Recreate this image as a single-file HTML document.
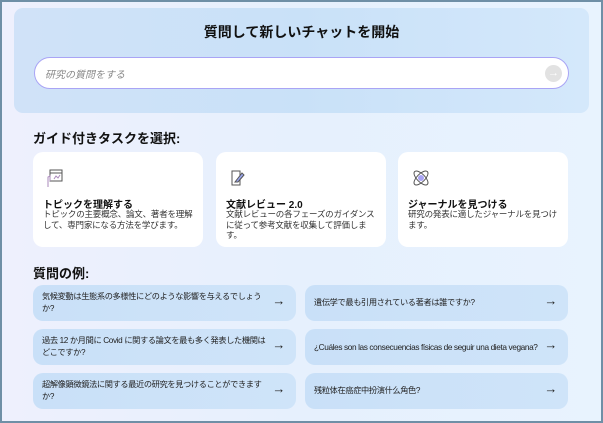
<!DOCTYPE html>
<html><head><meta charset="utf-8"><style>
*{margin:0;padding:0;box-sizing:border-box}
html,body{width:603px;height:423px;overflow:hidden}
body{font-family:"Liberation Sans","Noto Sans CJK JP",sans-serif;color:#111;background:linear-gradient(90deg,#eef0fd,#e6f0fd 50%,#e8f3fe);border:2px solid #6f8fa6;position:relative}
.top{position:absolute;left:12px;top:6px;width:575px;height:105px;border-radius:9px;background:linear-gradient(90deg,#d0e2f8,#c9e1f8 50%,#d4e8fb)}
.top h1{position:absolute;top:14px;width:100%;text-align:center;font-size:14px;font-weight:bold}
.inp{position:absolute;left:20px;top:49px;width:535px;height:32px;background:#fff;border:1px solid #a9a4f5;border-radius:16px}
.inp span{position:absolute;left:10px;top:8px;font-size:10px;font-style:italic;color:#888}
.inp i{position:absolute;right:6px;top:7px;width:17px;height:17px;border-radius:50%;background:#e2e2e2;color:#fff;font-style:normal;font-size:11px;text-align:center;line-height:17px}
h2{position:absolute;left:31px;font-size:13px;font-weight:bold}
.card{position:absolute;top:150px;width:170px;height:95px;background:#fff;border-radius:10px}
.card svg{position:absolute;left:13px;top:16px}
.card b{position:absolute;left:10px;top:44px;font-size:10px}
.card p{position:absolute;left:10px;top:57px;width:156px;font-size:8.5px;line-height:10.5px;color:#333;letter-spacing:-0.2px}
.q{position:absolute;height:36px;background:linear-gradient(90deg,#c9e0f8,#cfe4f9);border-radius:10px;font-size:8.2px;line-height:12px;color:#222;display:flex;align-items:center;padding-left:9px;padding-right:30px;letter-spacing:-0.35px}
.q:after{content:"→";position:absolute;right:11px;top:10px;font-size:13px;color:#222}
</style></head><body>
<div class="top"><h1>質問して新しいチャットを開始</h1>
<div class="inp"><span>研究の質問をする</span><i>→</i></div></div>
<h2 style="top:126px">ガイド付きタスクを選択:</h2>
<div class="card" style="left:31px"><svg width="18" height="20" viewBox="0 0 18 20" fill="none" stroke="#555" stroke-width="1"><rect x="4" y="2" width="12" height="11"/><line x1="4" y1="5" x2="16" y2="5"/><path d="M2 19V9l2 -1v5M8 11l2-3 2 2 2-3" stroke="#a8b"/></svg><b>トピックを理解する</b><p>トピックの主要概念、論文、著者を理解して、専門家になる方法を学びます。</p></div>
<div class="card" style="left:214px"><svg width="18" height="20" viewBox="0 0 18 20" fill="none" stroke="#555" stroke-width="1"><path d="M3 3h8v14H3z"/><path d="M6 14l7-9 2 2-6 7z" fill="#9aa6ee" stroke="#555"/></svg><b>文献レビュー 2.0</b><p>文献レビューの各フェーズのガイダンスに従って参考文献を収集して評価します。</p></div>
<div class="card" style="left:396px"><svg width="20" height="20" viewBox="0 0 20 20" fill="none" stroke="#555" stroke-width="1"><ellipse cx="10" cy="10" rx="9" ry="4" transform="rotate(45 10 10)"/><ellipse cx="10" cy="10" rx="9" ry="4" transform="rotate(-45 10 10)"/><circle cx="10" cy="10" r="3" fill="#a9a4f5" stroke="none"/></svg><b>ジャーナルを見つける</b><p>研究の発表に適したジャーナルを見つけます。</p></div>
<h2 style="top:261px">質問の例:</h2>
<div class="q" style="left:31px;top:283px;width:263px">気候変動は生態系の多様性にどのような影響を与えるでしょうか?</div>
<div class="q" style="left:303px;top:283px;width:263px">遺伝学で最も引用されている著者は誰ですか?</div>
<div class="q" style="left:31px;top:327px;width:263px">過去 12 か月間に Covid に関する論文を最も多く発表した機関はどこですか?</div>
<div class="q" style="left:303px;top:327px;width:263px;font-size:8.3px;letter-spacing:-0.4px;white-space:nowrap">¿Cuáles son las consecuencias físicas de seguir una dieta vegana?</div>
<div class="q" style="left:31px;top:371px;width:263px">超解像顕微鏡法に関する最近の研究を見つけることができますか?</div>
<div class="q" style="left:303px;top:371px;width:263px">残粒体在癌症中扮演什么角色?</div>
</body></html>
